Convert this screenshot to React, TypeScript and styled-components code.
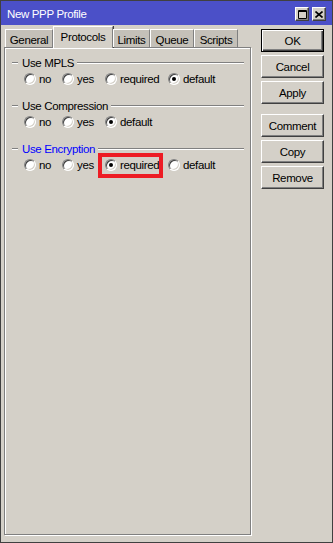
import React from 'react';
import styled, { createGlobalStyle } from 'styled-components';

const GlobalStyle = createGlobalStyle`
  html, body {
    margin: 0;
    padding: 0;
    background: #d4d0c8;
  }
  body {
    font-family: 'Liberation Sans', Arial, sans-serif;
    font-size: 11px;
    letter-spacing: -0.35px;
    color: #000;
  }
`;

interface RadioGroupDef {
  title: string;
  options: string[];
  value: string;
  active?: boolean;
  marked?: string;
}

const tabs = [
  { label: 'General', width: 48 },
  { label: 'Protocols', width: 60, active: true },
  { label: 'Limits', width: 37 },
  { label: 'Queue', width: 44 },
  { label: 'Scripts', width: 44 },
];

const groups: RadioGroupDef[] = [
  { title: 'Use MPLS', options: ['no', 'yes', 'required', 'default'], value: 'default' },
  { title: 'Use Compression', options: ['no', 'yes', 'default'], value: 'default' },
  {
    title: 'Use Encryption',
    options: ['no', 'yes', 'required', 'default'],
    value: 'required',
    active: true,
    marked: 'required',
  },
];

const buttonGroups = [['OK', 'Cancel', 'Apply'], ['Comment', 'Copy', 'Remove']];

const MaximizeIcon = () => (
  <svg width="9" height="9" viewBox="0 0 9 9">
    <path d="M0.5 0.5h8v8h-8z" fill="none" stroke="#000" />
    <path d="M0 1.5h9" stroke="#000" />
  </svg>
);

const CloseIcon = () => (
  <svg width="8" height="7" viewBox="0 0 8 7">
    <path d="M0.5 0.5l7 6M7.5 0.5l-7 6" stroke="#000" strokeWidth="1.6" />
  </svg>
);

const App: React.FC = () => {
  return (
    <>
      <GlobalStyle />
      <Window>
        <TitleBar>
          <Title>New PPP Profile</Title>
          <TitleButtons>
            <TitleButton>
              <MaximizeIcon />
            </TitleButton>
            <TitleButton>
              <CloseIcon />
            </TitleButton>
          </TitleButtons>
        </TitleBar>
        <Body>
          <LeftColumn>
            <TabRow>
              {tabs.map((t) => (
                <Tab key={t.label} active={!!t.active} w={t.width}>
                  {t.label}
                </Tab>
              ))}
            </TabRow>
            <Panel>
              {groups.map((g) => (
                <Group key={g.title}>
                  <Legend>
                    <LegendDash />
                    <LegendText active={!!g.active}>{g.title}</LegendText>
                    <LegendLine />
                  </Legend>
                  <RadioRow>
                    {g.options.map((o) => (
                      <RadioItem key={o}>
                        <RadioCircle>{g.value === o && <RadioDot />}</RadioCircle>
                        <RadioLabel>{o}</RadioLabel>
                        {g.marked === o && <Highlight />}
                      </RadioItem>
                    ))}
                  </RadioRow>
                </Group>
              ))}
            </Panel>
          </LeftColumn>
          <ButtonColumn>
            {buttonGroups.map((bg, i) => (
              <ButtonGroup key={i}>
                {bg.map((b) => (
                  <Button key={b} primary={b === 'OK'}>
                    {b}
                  </Button>
                ))}
              </ButtonGroup>
            ))}
          </ButtonColumn>
        </Body>
      </Window>
    </>
  );
};

const Window = styled.div`
  width: 333px;
  height: 543px;
  box-sizing: border-box;
  border: 1px solid #404040;
  background: #d4d0c8;
  display: flex;
  flex-direction: column;
`;

const TitleBar = styled.div`
  height: 24px;
  background: #4b50c8;
  display: flex;
  align-items: center;
  padding: 0 6px 0 6px;
  flex-shrink: 0;
`;

const Title = styled.div`
  color: #fff;
  font-size: 11.5px;
  padding-top: 1px;
  flex: 1;
`;

const TitleButtons = styled.div`
  display: flex;
  gap: 3px;
  padding-top: 2px;
`;

const TitleButton = styled.div`
  width: 14px;
  height: 14px;
  box-sizing: border-box;
  background: #d4d0c8;
  border: 1px solid;
  border-color: #fff #404040 #404040 #fff;
  box-shadow: inset -1px -1px 0 #808080;
  display: flex;
  align-items: center;
  justify-content: center;
`;

const Body = styled.div`
  flex: 1;
  display: flex;
  padding: 1px 8px 7px 3px;
  gap: 10px;
  min-height: 0;
`;

const LeftColumn = styled.div`
  width: 247px;
  display: flex;
  flex-direction: column;
`;

const TabRow = styled.div`
  display: flex;
  align-items: flex-end;
  height: 21px;
  padding-left: 1px;
  position: relative;
  z-index: 1;
`;

const Tab = styled.div<{ active: boolean; w: number }>`
  width: ${({ w }) => w}px;
  height: ${({ active }) => (active ? 22 : 18)}px;
  margin-bottom: ${({ active }) => (active ? -1 : 0)}px;
  box-sizing: border-box;
  background: ${({ active }) => (active ? '#d4d0c8' : '#c4c0b8')};
  border-top: 1px solid #fff;
  border-left: 1px solid #fff;
  border-right: 1px solid #808080;
  box-shadow: ${({ active }) => (active ? '1px 0 0 #404040' : 'none')};
  display: flex;
  justify-content: center;
  align-items: center;
  padding-top: ${({ active }) => (active ? 0 : 2)}px;
  padding-bottom: ${({ active }) => (active ? 2 : 0)}px;
  font-size: 11.5px;
`;

const Panel = styled.div`
  flex: 1;
  border: 1px solid #808080;
  box-shadow: inset 1px 1px 0 #fff, 1px 1px 0 #fff;
  padding-top: 8px;
  display: flex;
  flex-direction: column;
  gap: 13px;
`;

const Group = styled.div`
  display: flex;
  flex-direction: column;
  gap: 3px;
`;

const Legend = styled.div`
  display: flex;
  align-items: center;
  height: 13px;
  padding: 0 6px 0 7px;
`;

const EtchedLine = styled.div`
  height: 1px;
  background: #808080;
  border-bottom: 1px solid #fff;
`;

const LegendDash = styled(EtchedLine)`
  width: 6px;
`;

const LegendLine = styled(EtchedLine)`
  flex: 1;
`;

const LegendText = styled.span<{ active: boolean }>`
  color: ${({ active }) => (active ? '#0000ff' : '#000')};
  font-size: 11.5px;
  margin: 0 3px 0 4px;
  white-space: nowrap;
`;

const RadioRow = styled.div`
  display: grid;
  grid-template-columns: 38px 43px 63px auto;
  height: 14px;
  padding-left: 19px;
`;

const RadioItem = styled.div`
  display: flex;
  align-items: center;
  gap: 3px;
  position: relative;
`;

const RadioCircle = styled.div`
  width: 12px;
  height: 12px;
  box-sizing: border-box;
  border-radius: 50%;
  background: #fff;
  border: 1px solid;
  border-color: #808080 #fff #fff #808080;
  box-shadow: inset 1px 1px 0 #404040, inset -1px -1px 0 #d4d0c8;
  display: flex;
  align-items: center;
  justify-content: center;
  flex-shrink: 0;
`;

const RadioDot = styled.div`
  width: 4px;
  height: 4px;
  border-radius: 50%;
  background: #000;
`;

const RadioLabel = styled.span`
  font-size: 11.5px;
  white-space: nowrap;
`;

const Highlight = styled.div`
  position: absolute;
  left: -7px;
  top: -5px;
  width: 65px;
  height: 25px;
  box-sizing: border-box;
  border: 4px solid #ed1c24;
`;

const ButtonColumn = styled.div`
  display: flex;
  flex-direction: column;
  gap: 10px;
  padding-top: 3px;
`;

const ButtonGroup = styled.div`
  display: flex;
  flex-direction: column;
  gap: 3px;
`;

const Button = styled.div<{ primary: boolean }>`
  width: 63px;
  height: 23px;
  box-sizing: border-box;
  background: #d4d0c8;
  display: flex;
  align-items: center;
  justify-content: center;
  font-size: 11.5px;
  border: 1px solid;
  border-color: ${({ primary }) => (primary ? '#000' : '#fff #404040 #404040 #fff')};
  box-shadow: ${({ primary }) =>
    primary
      ? 'inset 1px 1px 0 #fff, inset -1px -1px 0 #404040, inset -2px -2px 0 #808080'
      : 'inset -1px -1px 0 #808080'};
`;

export default App;
